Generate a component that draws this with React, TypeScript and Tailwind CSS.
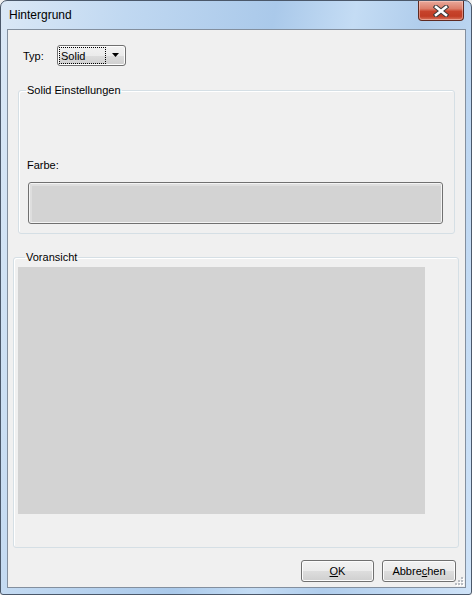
import { ReactNode } from 'react';

const btnFace =
  'bg-[linear-gradient(to_bottom,#f2f2f2_0%,#ebebeb_50%,#dddddd_51%,#cfcfcf_100%)] border border-[#707070] rounded-[3px] shadow-[inset_0_0_0_1px_#fcfcfc]';

function Btn({ children, w }: { children: ReactNode; w: string }) {
  return (
    <div className={`${btnFace} ${w} h-[22px] flex items-center justify-center text-black`}>
      {children}
    </div>
  );
}

function CloseButton() {
  return (
    <div className="absolute right-[7px] top-0 w-[46px] h-[20px] rounded-b-[4px] border border-t-0 border-[#5e2a22] bg-[linear-gradient(to_bottom,#e9a99b_0%,#dc7e6a_40%,#c7432b_55%,#c13c24_80%,#d9735b_100%)] shadow-[inset_0_0_0_1px_rgba(255,220,210,0.45)] flex items-center justify-center">
      <svg width="16" height="12" viewBox="0 0 16 12">
        <path d="M3 2 L13 10 M13 2 L3 10" stroke="#3a3a3a" strokeWidth="4.6" strokeLinecap="square" />
        <path d="M3 2 L13 10 M13 2 L3 10" stroke="#ffffff" strokeWidth="2.6" strokeLinecap="square" />
      </svg>
    </div>
  );
}

export default function App() {
  return (
    <div className="w-[472px] h-[595px] bg-[#f0f0f0]">
      <div className="relative w-[472px] h-[595px] flex flex-col rounded-t-[7px] rounded-b-[3px] border border-[#4b586a] bg-[linear-gradient(100deg,#dbe8f6_0%,#c0d8f1_22%,#aac9ea_48%,#c4dcf4_62%,#b0cdec_74%,#cfe3f8_100%)] font-['Liberation_Sans',Arial,sans-serif] text-[11px] text-black">
        {/* Title bar */}
        <div className="h-[28px] pl-[8px] pt-[7px] text-[12px] leading-[14px] text-black">Hintergrund</div>
        <CloseButton />

        {/* Client area */}
        <div className="relative ml-[6px] mr-[5px] mb-[6px] flex-1 border border-[#838f9e] bg-[#f0f0f0] flex flex-col">
          {/* Typ row */}
          <div className="mt-[15px] pl-[15px] flex items-center h-[21px]">
            <span className="w-[34px] leading-[16px]">Typ:</span>
            <div className={`${btnFace} w-[69px] h-[21px] flex items-center pl-[1px] pr-[4px]`}>
              <span className="w-[47px] h-[17px] border border-dotted border-black flex items-center pl-[1px] leading-[14px]">
                Solid
              </span>
              <svg className="ml-auto mr-[1px]" width="8" height="5" viewBox="0 0 8 5">
                <path d="M0 0 H7 L3.5 4 Z" fill="#000" />
              </svg>
            </div>
          </div>

          {/* Solid Einstellungen */}
          <fieldset className="mt-[16px] ml-[10px] w-[437px] border border-[#d5dfe5] rounded-[3px] pb-[9px] shadow-[inset_1px_1px_0_#ffffff]">
            <legend className="ml-[7px] px-[1px] leading-[16px]">Solid Einstellungen</legend>
            <div className="mt-[59px] ml-[8px] leading-[16px]">Farbe:</div>
            <div className="mt-[9px] ml-[9px] w-[415px] h-[42px] border border-[#707070] rounded-[3px] bg-[#f4f4f4] p-[1px]">
              <div className="w-full h-full bg-[#d3d3d3] border-t-[2px] border-l-[2px] border-[#dedede]" />
            </div>
          </fieldset>

          {/* Voransicht */}
          <fieldset className="mt-[15px] ml-[5px] w-[446px] h-[299px] border border-[#d5dfe5] rounded-[3px] pl-[4px] shadow-[inset_1px_1px_0_#ffffff]">
            <legend className="ml-[7px] px-[1px] leading-[16px]">Voransicht</legend>
            <div className="mt-[2px] w-[407px] h-[247px] bg-[#d3d3d3]" />
          </fieldset>

          {/* Buttons */}
          <div className="mt-[12px] pr-[9px] flex justify-end gap-[8px]">
            <Btn w="w-[73px]">
              <span>
                <span className="underline">O</span>K
              </span>
            </Btn>
            <Btn w="w-[74px]">
              <span>
                Abbre<span className="underline">c</span>hen
              </span>
            </Btn>
          </div>

          {/* Size grip */}
          <svg className="absolute right-[1px] bottom-[1px]" width="10" height="10" viewBox="0 0 10 10">
            {[
              [7, 1],
              [4, 4],
              [7, 4],
              [1, 7],
              [4, 7],
              [7, 7],
            ].map(([x, y], i) => (
              <g key={i}>
                <rect x={x + 1} y={y + 1} width="2" height="2" fill="#ffffff" />
                <rect x={x} y={y} width="2" height="2" fill="#b8bcc2" />
              </g>
            ))}
          </svg>
        </div>
      </div>
    </div>
  );
}
